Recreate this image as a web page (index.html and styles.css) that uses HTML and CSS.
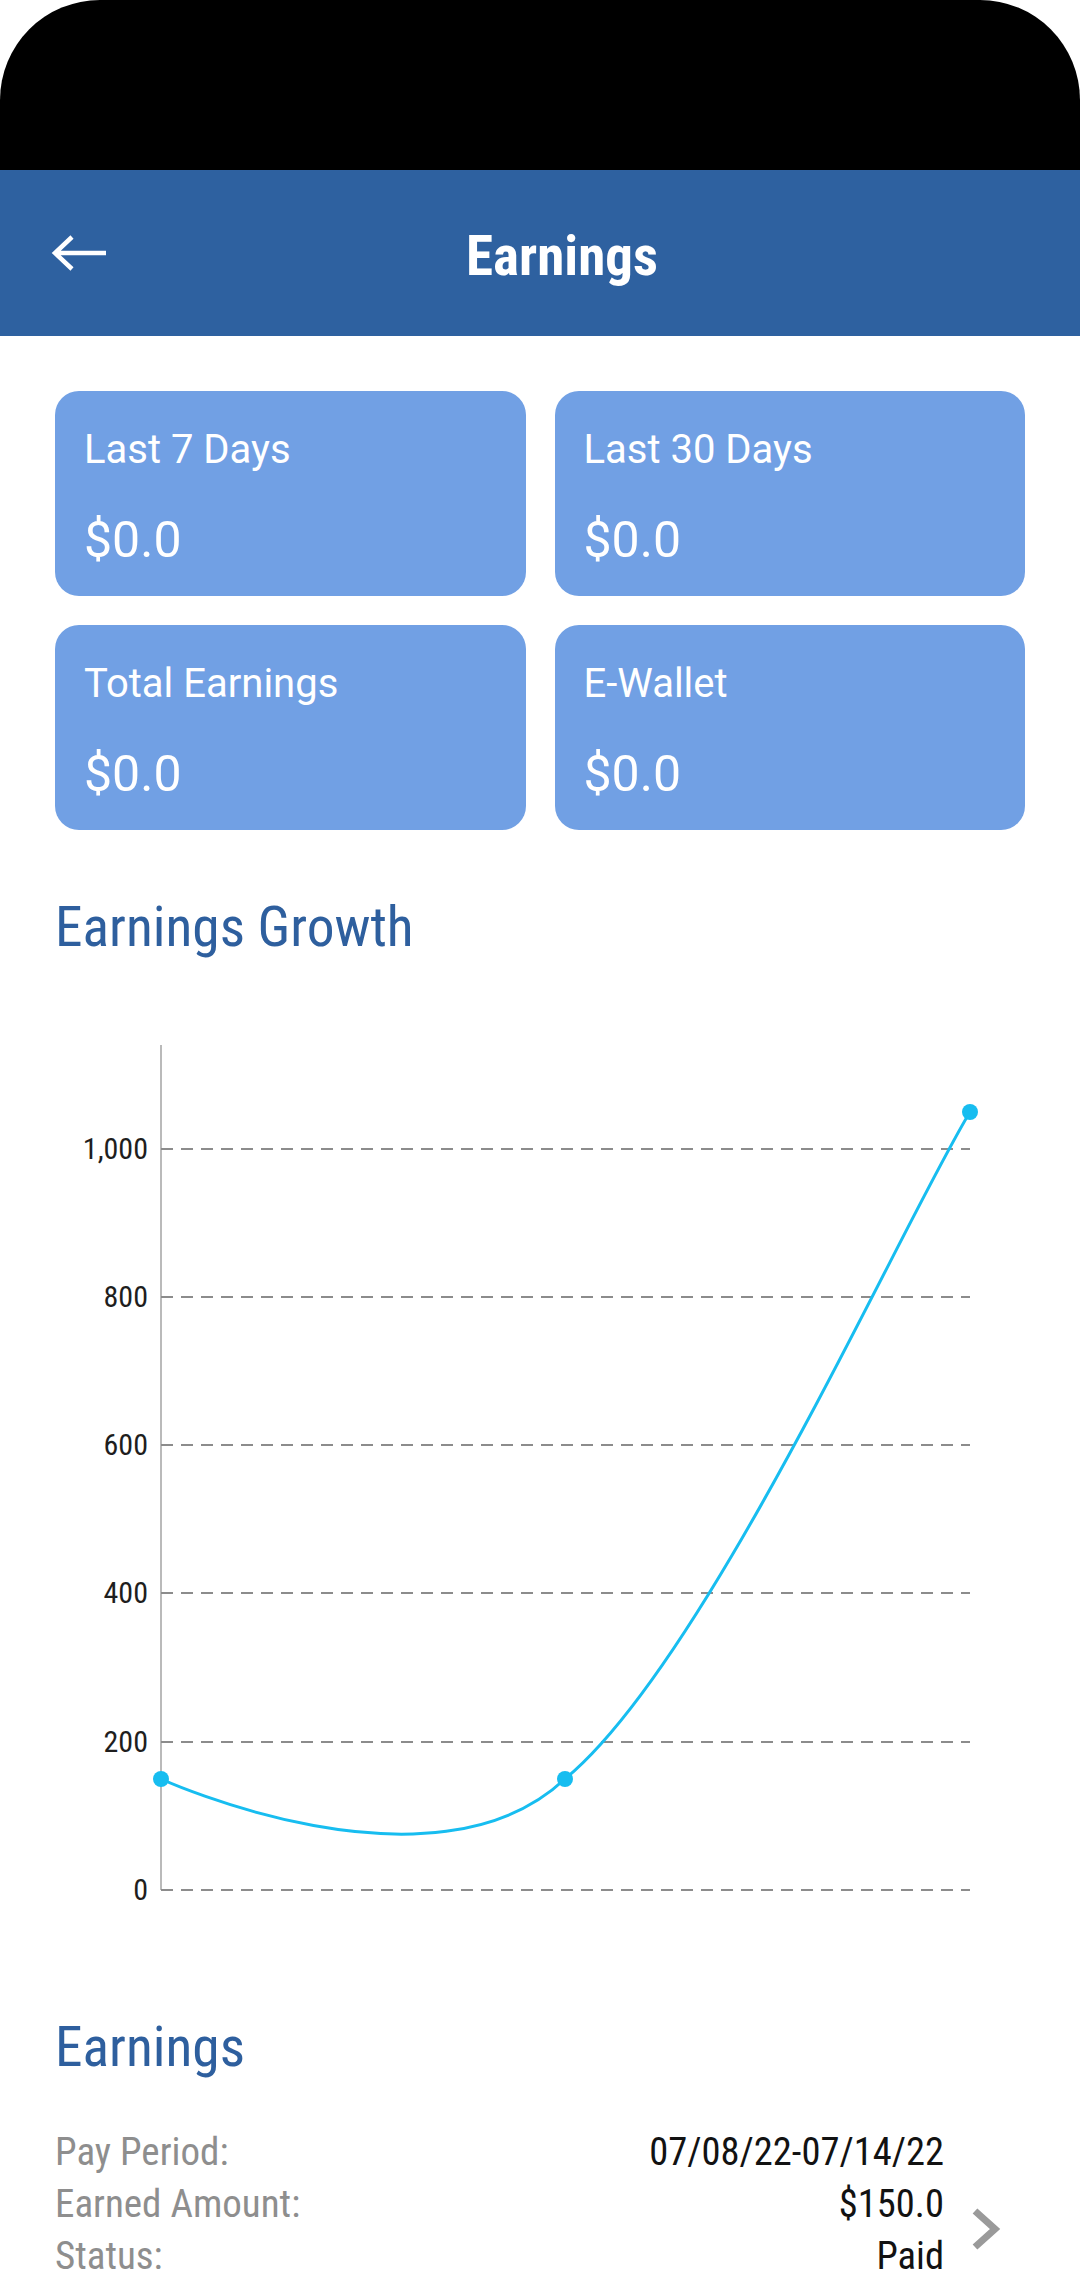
FILE: index.html
```html
<!DOCTYPE html>
<html lang="en">
<head>
<meta charset="utf-8">
<title>Earnings</title>
<link rel="stylesheet" href="styles.css">
</head>
<body>
<div class="screen">
  <div class="status-bar"></div>
  <header class="app-bar">
    <svg class="back" width="56" height="40" viewBox="50 233 56 40" aria-label="Back">
      <path d="M106 253 H55 M72 237 L55 253 L72 269" fill="none" stroke="#fff" stroke-width="4.5"/>
    </svg>
    <h1 class="title cond">Earnings</h1>
  </header>

  <section class="stats">
    <div class="stat">
      <div class="stat-label">Last 7 Days</div>
      <div class="stat-value">$0.0</div>
    </div>
    <div class="stat">
      <div class="stat-label">Last 30 Days</div>
      <div class="stat-value">$0.0</div>
    </div>
    <div class="stat">
      <div class="stat-label">Total Earnings</div>
      <div class="stat-value">$0.0</div>
    </div>
    <div class="stat">
      <div class="stat-label">E-Wallet</div>
      <div class="stat-value">$0.0</div>
    </div>
  </section>

  <h2 class="section-title cond growth-title">Earnings Growth</h2>

  <svg class="chart" width="1080" height="940" viewBox="0 980 1080 940">
    <line class="axis" x1="161" y1="1045" x2="161" y2="1890"/>
    <g class="grid">
      <line x1="161" y1="1149" x2="970" y2="1149"/>
      <line x1="161" y1="1297" x2="970" y2="1297"/>
      <line x1="161" y1="1445" x2="970" y2="1445"/>
      <line x1="161" y1="1593" x2="970" y2="1593"/>
      <line x1="161" y1="1742" x2="970" y2="1742"/>
      <line x1="161" y1="1890" x2="970" y2="1890"/>
    </g>
    <g class="ylabels">
      <text x="148" y="1159">1,000</text>
      <text x="148" y="1307">800</text>
      <text x="148" y="1455">600</text>
      <text x="148" y="1603">400</text>
      <text x="148" y="1752">200</text>
      <text x="148" y="1900">0</text>
    </g>
    <path class="curve" d="M161 1779 C161 1779 433 1903 565 1779 C706.6 1662.3 899.1 1228.7 970 1112"/>
    <g class="dots">
      <circle cx="161" cy="1779" r="8"/>
      <circle cx="565" cy="1779" r="8"/>
      <circle cx="970" cy="1112" r="8"/>
    </g>
  </svg>

  <h2 class="section-title cond list-title">Earnings</h2>

  <div class="payout">
    <dl class="payout-rows cond">
      <dt>Pay Period:</dt><dd>07/08/22-07/14/22</dd>
      <dt>Earned Amount:</dt><dd>$150.0</dd>
      <dt>Status:</dt><dd>Paid</dd>
    </dl>
    <svg class="chevron" width="30" height="44" viewBox="970 2207 30 44">
      <path d="M974 2211 L994 2229 L974 2247" fill="none" stroke="#9a9a9a" stroke-width="7"/>
    </svg>
  </div>
</div>
</body>
</html>
```

FILE: styles.css
```css
html, body {
  margin: 0;
  padding: 0;
  background: #ffffff;
}

body {
  width: 1080px;
  height: 2280px;
  overflow: hidden;
  font-family: Roboto, "Noto Sans", sans-serif;
}

.screen {
  width: 1080px;
  height: 2280px;
  overflow: hidden;
  background: #ffffff;
}

.cond {
  font-family: "Roboto Condensed", Roboto, "Noto Sans", sans-serif;
  font-stretch: 87.5%;
}

.status-bar {
  height: 170px;
  background: #000000;
  border-radius: 100px 100px 0 0;
}

.app-bar {
  height: 166px;
  background: #2e61a0;
  display: flex;
  align-items: center;
}

.back {
  display: block;
  margin-left: 50px;
  flex: none;
}

.title {
  flex: 1;
  margin: 0;
  padding: 6px 62px 0 0;
  text-align: center;
  color: #ffffff;
  font-size: 55px;
  font-weight: 700;
  line-height: 1;
}

.stats {
  display: grid;
  grid-template-columns: 1fr 1fr;
  gap: 29px;
  padding: 55px 55px 0;
}

.stat {
  height: 205px;
  box-sizing: border-box;
  background: #71a0e4;
  border-radius: 24px;
  padding: 39px 0 0 29px;
  color: #ffffff;
}

.stat-label {
  font-size: 40px;
  line-height: 40px;
}

.stat-value {
  margin-top: 45px;
  font-size: 50px;
  line-height: 50px;
}

.section-title {
  margin: 0;
  padding-left: 55px;
  color: #2e5f9e;
  font-size: 55.4px;
  font-weight: 400;
  line-height: 56px;
}

.growth-title {
  margin-top: 70px;
}

.chart {
  display: block;
  margin-top: 24px;
}

.axis {
  stroke: #a3a3a3;
  stroke-width: 1.5;
}

.grid line {
  stroke: #8c8c8c;
  stroke-width: 2;
  stroke-dasharray: 12 8;
}

.ylabels text {
  font-family: "Roboto Condensed", Roboto, "Noto Sans", sans-serif;
  font-stretch: 87.5%;
  font-size: 30px;
  fill: #1e1e1e;
  text-anchor: end;
}

.curve {
  fill: none;
  stroke: #17bdf0;
  stroke-width: 3;
}

.dots circle {
  fill: #17bdf0;
}

.list-title {
  margin-top: 100px;
}

.payout {
  display: flex;
  align-items: flex-start;
  padding: 53px 79px 0 55px;
}

.payout-rows {
  flex: 1;
  margin: 0;
  display: grid;
  grid-template-columns: auto 1fr;
  row-gap: 6px;
  font-size: 39px;
  line-height: 46px;
}

.payout-rows dt {
  color: #8e8e8e;
}

.payout-rows dd {
  margin: 0;
  text-align: right;
  color: #121212;
  font-size: 38.5px;
}

.chevron {
  display: block;
  flex: none;
  margin: 78px 0 0 27px;
}
```
